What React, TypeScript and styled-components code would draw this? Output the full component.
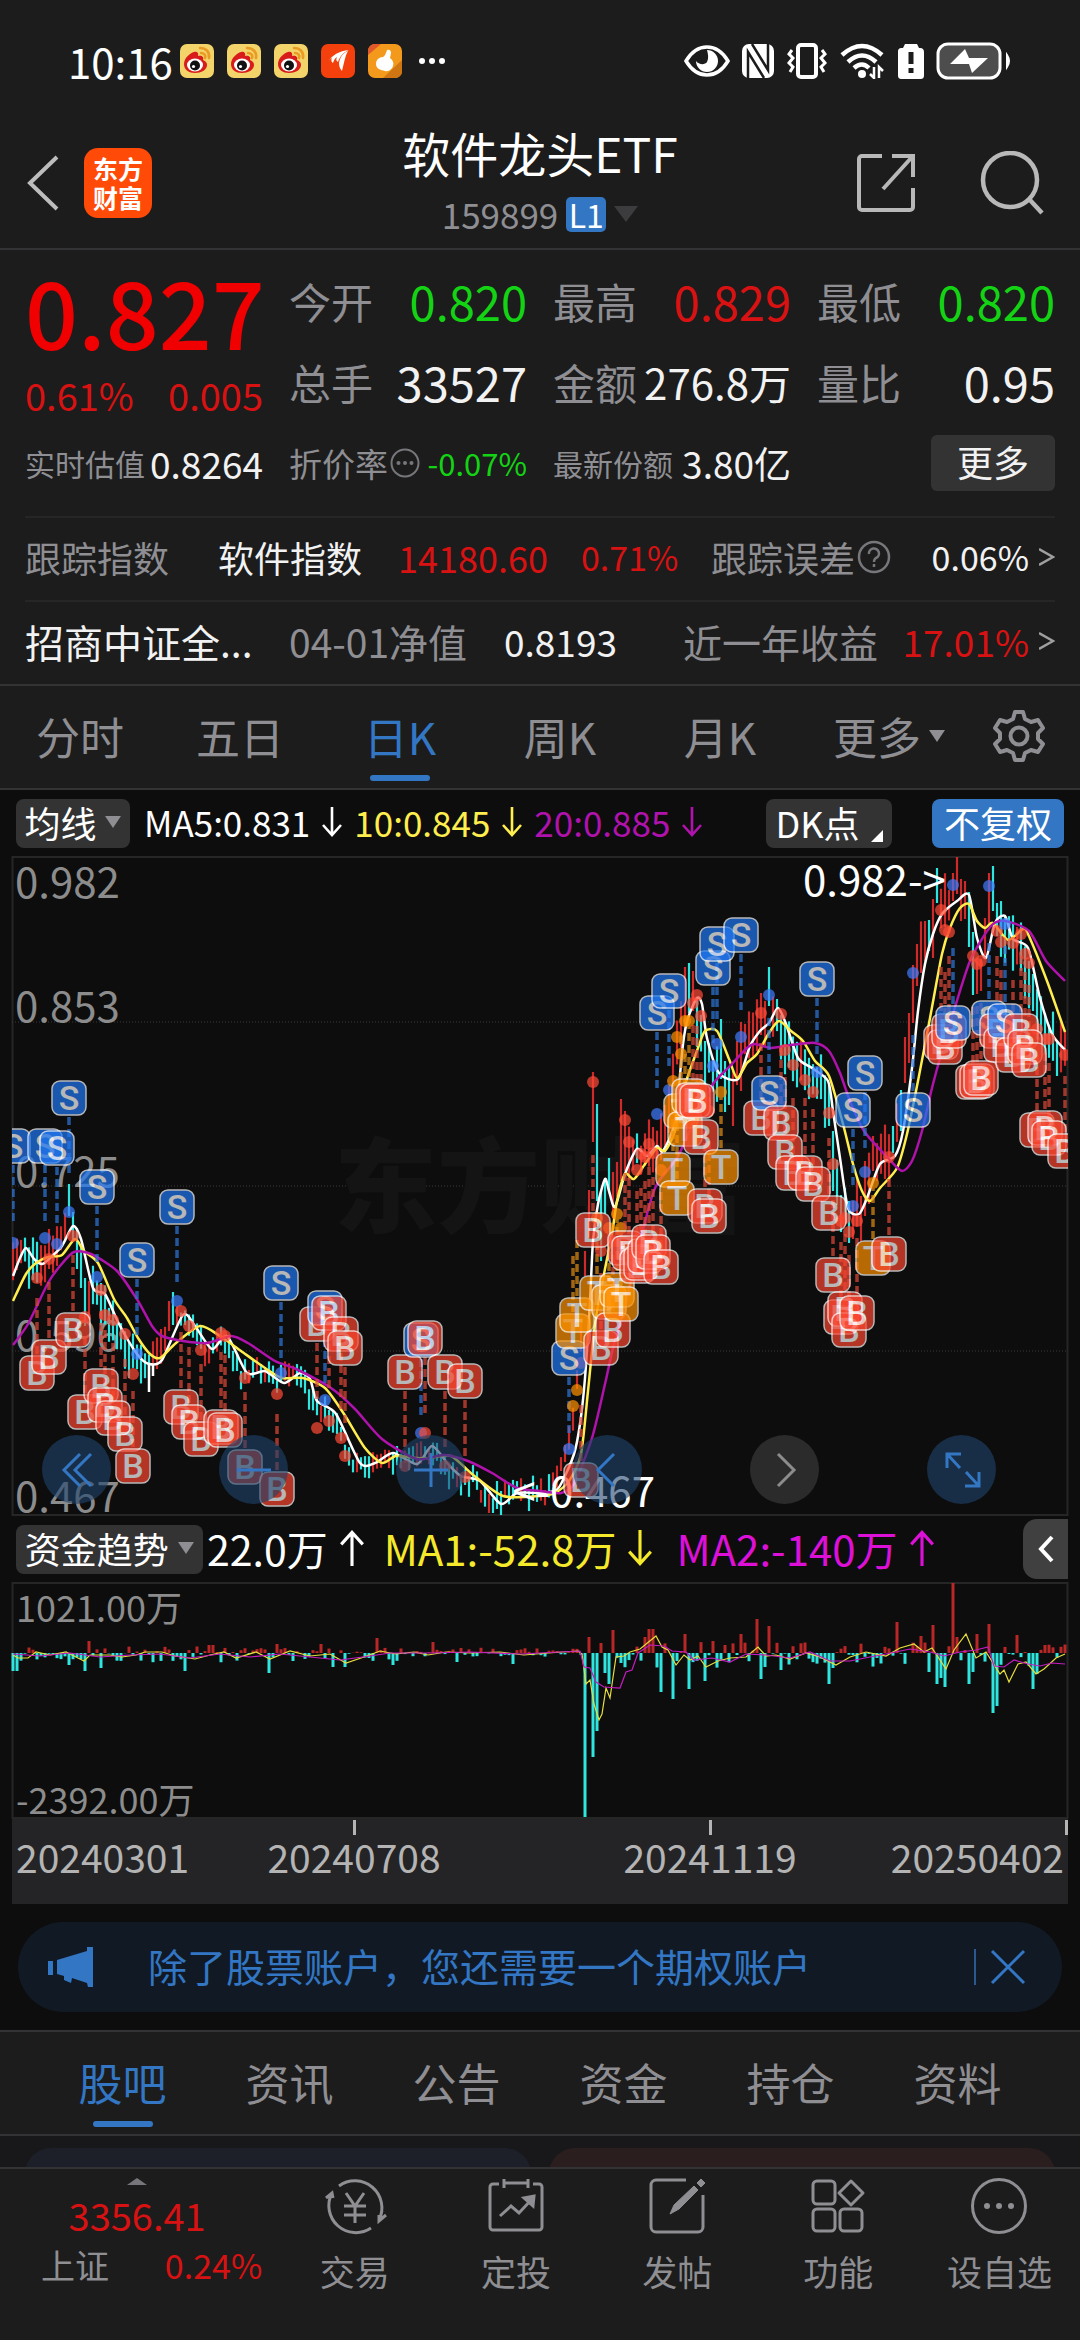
import React from "react";
import styled, { createGlobalStyle } from "styled-components";

const color = {
  page: "#1c1c1c",
  chart: "#0d0d0d",
  line: "#333335",
  soft: "#262626",
  label: "#8e8e93",
  text: "#f2f2f2",
  red: "#d81212",
  green: "#14d214",
  blue: "#3276c4",
  chip: "#333334",
};

const GlobalStyle = createGlobalStyle`
  *, *::before, *::after { box-sizing: border-box; }
  html, body { margin: 0; padding: 0; background: ${color.page}; }
  body { font-family: "Noto Sans CJK SC", "Noto Sans", sans-serif; font-weight: 400; color: ${color.text}; }
  button { font: inherit; color: inherit; background: none; border: 0; padding: 0; margin: 0; }
  svg { display: block; flex: none; }
`;

const Page = styled.div`
  display: flex;
  flex-direction: column;
  min-height: 100vh;
  overflow: hidden;
  white-space: nowrap;
`;

/* ---------- status bar ---------- */

const StatusBar = styled.div`
  display: flex;
  align-items: center;
  justify-content: space-between;
  height: 122px;
  padding: 0 68px;
`;

const StatusGroup = styled.div<{ $gap: number }>`
  display: flex;
  align-items: center;
  gap: ${(p) => p.$gap}px;
`;

const Clock = styled.time`
  font-size: 42px;
  line-height: 48px;
  color: #fff;
  margin-right: -6px;
`;

/* ---------- header ---------- */

const Header = styled.header`
  display: grid;
  grid-template-columns: 1fr auto 1fr;
  align-items: center;
  height: 128px;
  padding: 0 26px 4px;
  border-bottom: 2px solid ${color.line};
`;

const HeaderSide = styled.div<{ $end?: boolean }>`
  display: flex;
  align-items: center;
  justify-content: ${(p) => (p.$end ? "flex-end" : "flex-start")};
  gap: ${(p) => (p.$end ? 64 : 24)}px;
  padding-right: ${(p) => (p.$end ? 10 : 0)}px;
`;

const Logo = styled.div`
  display: grid;
  place-content: center;
  width: 68px;
  height: 70px;
  border-radius: 14px;
  background: #ff4a08;
  color: #fff;
  font-size: 25px;
  line-height: 29px;
  font-weight: 700;
`;

const TitleBlock = styled.div`
  display: flex;
  flex-direction: column;
  align-items: center;
  gap: 7px;
  padding-bottom: 5px;
`;

const Title = styled.h1`
  margin: 0;
  font-size: 48px;
  line-height: 60px;
  font-weight: 400;
  color: #fff;
`;

const Code = styled.div`
  display: flex;
  align-items: center;
  gap: 8px;
  font-size: 35px;
  line-height: 50px;
  color: ${color.label};
`;

const Level = styled.span`
  width: 40px;
  border-radius: 5px;
  background: ${color.blue};
  color: #fff;
  font-size: 32px;
  line-height: 35px;
  text-align: center;
`;

const Triangle = styled.span<{ $size: number; $tone: string; $up?: boolean }>`
  flex: none;
  border: ${(p) => p.$size}px solid transparent;
  border-top-color: ${(p) => (p.$up ? "transparent" : p.$tone)};
  border-top-width: ${(p) => (p.$up ? 0 : p.$size + 4)}px;
  border-bottom-color: ${(p) => (p.$up ? p.$tone : "transparent")};
  border-bottom-width: ${(p) => (p.$up ? p.$size - 3 : 0)}px;
`;

/* ---------- quote ---------- */

const Quote = styled.section`
  padding: 11px 25px 0;
  border-bottom: 2px solid ${color.line};
`;

const QuoteGrid = styled.div`
  display: grid;
  grid-template-columns: repeat(4, minmax(0, 1fr));
  grid-template-rows: 80px 82px 80px;
  column-gap: 26px;
  padding-bottom: 13px;
`;

const PriceCell = styled.div`
  grid-row: span 2;
  display: flex;
  flex-direction: column;
  justify-content: space-between;
  color: ${color.red};
`;

const Price = styled.strong`
  font-size: 93px;
  line-height: 98px;
  font-weight: 500;
  color: #f00000;
`;

const Change = styled.div`
  display: flex;
  justify-content: space-between;
  font-size: 38px;
  line-height: 56px;
`;

const Cell = styled.div`
  display: flex;
  align-items: center;
  justify-content: space-between;
`;

const Text = styled.span<{ $size: number; $tone?: string }>`
  font-size: ${(p) => p.$size}px;
  line-height: 56px;
  color: ${(p) => p.$tone ?? color.text};
`;

const Hint = styled.span`
  display: flex;
  align-items: center;
  gap: 2px;
`;

const MoreButton = styled.button`
  width: 124px;
  height: 56px;
  margin-left: auto;
  padding-bottom: 4px;
  border-radius: 6px;
  background: ${color.chip};
  font-size: 36px;
  line-height: 52px;
`;

const InfoRow = styled.div<{ $cols: string }>`
  display: grid;
  grid-template-columns: ${(p) => p.$cols};
  align-items: center;
  height: 84px;
  padding-bottom: 5px;
  border-top: 2px solid ${color.soft};
`;

const RowEnd = styled.span`
  display: flex;
  align-items: center;
  justify-content: flex-end;
  gap: 10px;
`;

/* ---------- tabs ---------- */

const Tabs = styled.nav<{ $left: number; $right: number }>`
  display: flex;
  height: 104px;
  padding: 0 ${(p) => p.$right}px 0 ${(p) => p.$left}px;
  border-bottom: 2px solid ${color.line};
`;

const Tab = styled.button<{ $active?: boolean; $grow?: number }>`
  display: flex;
  align-items: center;
  justify-content: center;
  gap: 8px;
  flex: ${(p) => p.$grow ?? 160} 1 0;
  padding-bottom: 2px;
  font-size: 44px;
  line-height: 60px;
  color: ${(p) => (p.$active ? color.blue : color.label)};
  position: relative;
  &::after {
    content: "";
    display: ${(p) => (p.$active ? "block" : "none")};
    position: absolute;
    left: calc(50% - 30px);
    bottom: 7px;
    width: 60px;
    height: 6px;
    border-radius: 3px;
    background: ${color.blue};
  }
`;

/* ---------- chart ---------- */

const ChartArea = styled.section`
  background: ${color.chart};
`;

const LegendRow = styled.div`
  display: flex;
  align-items: center;
  height: 66px;
  padding: 0 16px;
`;

const Chip = styled.button<{ $w: number; $tone?: string }>`
  display: flex;
  align-items: center;
  justify-content: space-around;
  position: relative;
  width: ${(p) => p.$w}px;
  height: 49px;
  padding: 0 4px 3px;
  border-radius: 8px;
  background: ${(p) => p.$tone ?? color.chip};
  color: #fff;
  font-size: 36px;
  line-height: 46px;
`;

const Corner = styled.span`
  align-self: flex-end;
  margin-bottom: 3px;
  border-left: 12px solid transparent;
  border-bottom: 12px solid #fff;
`;

const Legend = styled.span<{ $tone: string; $size: number; $gap: number }>`
  display: flex;
  align-items: center;
  gap: 12px;
  margin-left: ${(p) => p.$gap}px;
  padding-bottom: 3px;
  font-size: ${(p) => p.$size}px;
  line-height: 48px;
  color: ${(p) => p.$tone};
`;

const Spacer = styled.span<{ $w?: number }>`
  flex: ${(p) => (p.$w ? `0 0 ${p.$w}px` : "1 1 0")};
`;

const Collapse = styled.button`
  display: grid;
  place-items: center;
  width: 45px;
  height: 60px;
  margin-right: -4px;
  border-radius: 14px 0 0 14px;
  background: #404041;
`;

const ChartBox = styled.div`
  position: relative;
`;

const ChartSvg = styled.svg`
  width: 100%;
  height: auto;
`;

const ChartTools = styled.div`
  position: absolute;
  left: 0;
  right: 0;
  bottom: 12px;
  display: flex;
  justify-content: space-between;
  padding: 0 84px 0 42px;
`;

const Tool = styled.button<{ $muted?: boolean }>`
  display: grid;
  place-items: center;
  width: 69px;
  height: 69px;
  border-radius: 50%;
  color: ${(p) => (p.$muted ? "#8c8c8c" : color.blue)};
  background: ${(p) => (p.$muted ? "rgba(60, 60, 60, 0.65)" : "rgba(31, 66, 108, 0.6)")};
`;

const Dates = styled.div`
  display: grid;
  grid-template-columns: minmax(0, 164fr) minmax(0, 356fr) minmax(0, 356fr) minmax(0, 180fr);
  height: 68px;
  margin: 0 12px;
  background: #242426;
  color: #b4b4b4;
  font-size: 39px;
  line-height: 40px;
`;

const DateLabel = styled.time<{ $align: string }>`
  display: flex;
  justify-content: ${(p) => p.$align};
  padding: 0 4px;
`;

/* ---------- banner ---------- */

const Banner = styled.aside`
  display: flex;
  align-items: center;
  height: 90px;
  margin: 0 18px;
  padding: 0 36px 0 30px;
  border-radius: 45px;
  background: #111a24;
  color: ${color.blue};
  font-size: 39px;
  line-height: 56px;
`;

const BannerWrap = styled.div`
  padding: 18px 0;
`;

const BannerText = styled.span`
  flex: 1;
  padding: 0 0 4px 54px;
`;

const Divider = styled.span`
  width: 2px;
  height: 36px;
  margin-right: 14px;
  background: #29598f;
`;

const TabSection = styled.div`
  border-top: 2px solid ${color.line};
`;

const Cards = styled.div`
  display: grid;
  grid-template-columns: 1fr 1fr;
  gap: 18px;
  height: 31px;
  padding: 12px 25px 0;
  background: #18181a;
  overflow: hidden;
`;

const Card = styled.div<{ $tone: string }>`
  height: 60px;
  border-radius: 26px;
  background: ${(p) => p.$tone};
`;

/* ---------- bottom bar ---------- */

const BottomBar = styled.footer`
  display: flex;
  flex: 1;
  min-height: 176px;
  border-top: 2px solid ${color.line};
`;

const Market = styled.button`
  display: flex;
  flex-direction: column;
  align-items: center;
  flex: 274 1 0;
  padding-top: 9px;
  font-size: 38px;
  line-height: 48px;
  color: ${color.red};
`;

const MarketValue = styled.span`
  margin-top: 6px;
`;

const MarketRow = styled.span`
  display: flex;
  justify-content: space-between;
  align-self: stretch;
  padding: 0 12px 0 41px;
  font-size: 34px;
  line-height: 52px;
`;

const Action = styled.button`
  display: flex;
  flex-direction: column;
  align-items: center;
  flex: 161 1 0;
  padding-top: 9px;
  gap: 11px;
  font-size: 35px;
  line-height: 52px;
  color: ${color.label};
`;

const Muted = styled.span`
  color: ${color.label};
`;

/* ---------- icons ---------- */

const Weibo = () => (
  <svg width="34" height="34" viewBox="0 0 34 34">
    <rect width="34" height="34" rx="7" fill="#f3d46a" />
    <path d="M20 4c6 0 10 4 9 10M21 9c3 0 5 2 4 5" fill="none" stroke="#e99b23" strokeWidth="2.6" strokeLinecap="round" />
    <path d="M14 8c3-1 5 1 4 4 4-1 6 1 5 4 3 1 4 3 4 5 0 5-6 8-12 8S4 26 4 20 10 9 14 8z" fill="#d81b1b" />
    <ellipse cx="15" cy="21" rx="8" ry="6.5" fill="#fff" />
    <circle cx="15" cy="21.500" r="5" fill="#111" />
    <circle cx="13.500" cy="22.500" r="1.600" fill="#fff" />
  </svg>
);

const EastMoney = () => (
  <svg width="34" height="34" viewBox="0 0 34 34">
    <rect width="34" height="34" rx="7" fill="#f4400c" />
    <path d="M7 18C11 11 18 7 28 6c-5 2-9 6-11 12-2-1-2-3-1-5-2 1-3 3-4 6-2-1-2-3-1-5-2 1-3 2-4 4z" fill="#fff" />
    <path d="M18 19c1-6 4-10 9-12-3 5-4 12-6 20-2-2-3-5-3-8z" fill="#fff" />
  </svg>
);

const Thumb = () => (
  <svg width="34" height="34" viewBox="0 0 34 34">
    <rect width="34" height="34" rx="7" fill="#f39a1d" />
    <path d="M34 16v11a7 7 0 0 1-7 7H15z" fill="#cf7612" />
    <path d="M0 11V7a7 7 0 0 1 7-7h6z" fill="#e2582b" />
    <path d="M19 6c2-1 4 0 4 3l-1 5c3 2 4 5 3 8s-4 6-8 5-9-2-9-7c0-4 3-7 7-7 2-1 3-4 4-7z" fill="#fff" />
  </svg>
);

const StatusIcons = () => (
  <StatusGroup $gap={12}>
    <svg width="46" height="32" viewBox="0 0 46 32">
      <path d="M2 16C8 6 15 2 23 2s15 4 21 14c-6 10-13 14-21 14S8 26 2 16z" fill="none" stroke="#fff" strokeWidth="3.500" />
      <path d="M23 5a11 11 0 1 1-11 11c3 4 9 4 11 1 2-4 1-8 0-12z" fill="#fff" />
    </svg>
    <svg width="32" height="34" viewBox="0 0 32 34">
      <rect x="0" y="0" width="32" height="34" rx="7" fill="#fff" />
      <path d="M6 34V8l16 26M10 0l16 26V0" fill="none" stroke="#1c1c1c" strokeWidth="2.500" />
    </svg>
    <svg width="42" height="36" viewBox="0 0 42 36" fill="none" stroke="#fff" strokeWidth="3">
      <rect x="12" y="2" width="18" height="32" rx="3" strokeWidth="4" />
      <path d="M6 7L3 11l4 4-4 5 4 4-3 5M36 7l3 4-4 4 4 5-4 4 3 5" />
    </svg>
    <svg width="46" height="36" viewBox="0 0 46 36" fill="none" stroke="#fff" strokeWidth="4.500">
      <path d="M2 12Q22-6 42 12M8 19Q22 6 36 19M14 25Q22 18 29 25" />
      <circle cx="22" cy="31" r="4" fill="#fff" stroke="none" />
      <path d="M34 24v11l-4-4M39 35V24l4 4" strokeWidth="2.500" />
    </svg>
    <svg width="26" height="35" viewBox="0 0 26 35">
      <path d="M7 0h12l2 4h1c3 0 4 2 4 4v23c0 3-1 4-4 4H4c-3 0-4-1-4-4V8c0-3 1-4 4-4h1z" fill="#fff" />
      <path d="M13 8v12M13 24v5" stroke="#1c1c1c" strokeWidth="5" />
    </svg>
    <svg width="76" height="38" viewBox="0 0 76 38">
      <rect x="2" y="2" width="62" height="34" rx="10" fill="#4d4d4d" stroke="#fff" strokeWidth="3" />
      <path d="M29 7l4 9h19L36 31l-3-9H14z" fill="#fff" />
      <path d="M71 13q4 6 0 12z" fill="#fff" stroke="#fff" strokeWidth="2" />
    </svg>
  </StatusGroup>
);

const Arrow = ({ up, size = 30 }: { up?: boolean; size?: number }) => (
  <svg width={(size * 2) / 3} height={size} viewBox="0 0 20 30" fill="none" stroke="currentColor" strokeWidth="2.600">
    <path d={up ? "M10 30V2M1 12l9-10 9 10" : "M10 0v28M1 18l9 10 9-10"} />
  </svg>
);

const Gear = () => (
  <svg width="54" height="54" viewBox="0 0 54 54" fill="none" stroke={color.label} strokeWidth="4" strokeLinejoin="round">
    <path d="M23 3h8l2 7 6 3 7-2 5 8-5 5v6l5 5-5 8-7-2-6 3-2 7h-8l-2-7-6-3-7 2-5-8 5-5v-6l-5-5 5-8 7 2 6-3z" />
    <circle cx="27" cy="27" r="8.500" />
  </svg>
);

/* ---------- chart data ---------- */

type Pt = [number, number];

const parse = (s: string): Pt[] => s.split(" ").map((p) => p.split(",").map(Number) as Pt);

const ma5 = parse(
  "13,1275 20,1257 26,1247 34,1258 42,1263 49,1258 62,1245 73,1225 81,1238 93,1287 105,1293 119,1323 137,1353 149,1363 162,1359 183,1314 195,1325 212,1348 227,1335 247,1372 265,1370 284,1382 300,1372 310,1378 317,1400 336,1413 360,1462 375,1462 393,1452 417,1463 432,1445 448,1463 461,1475 480,1480 501,1503 517,1492 540,1492 555,1490 561,1483 574,1453 580,1423 585,1377 590,1300 593,1240 598,1203 605,1178 609,1190 615,1206 625,1173 637,1148 647,1155 657,1145 663,1150 675,1120 683,1043 688,1017 697,997 702,1003 707,1037 719,1072 738,1078 750,1045 760,1030 769,1022 778,1007 786,1023 798,1057 812,1067 828,1080 833,1110 840,1157 848,1207 859,1213 867,1197 880,1163 895,1155 903,1130 912,1067 918,1010 925,963 933,933 942,913 957,900 969,894 977,937 986,957 995,922 1005,915 1013,938 1028,947 1040,997 1052,1033 1065,1049"
);
const ma10 = parse(
  "13,1300 26,1273 36,1262 48,1256 62,1254 75,1238 84,1250 98,1262 114,1298 127,1317 138,1337 150,1353 160,1357 176,1342 200,1325 220,1335 241,1350 265,1367 282,1377 303,1377 325,1387 344,1413 365,1447 382,1462 396,1455 417,1457 430,1457 451,1455 472,1473 503,1495 540,1495 555,1492 569,1480 581,1453 588,1390 595,1323 604,1273 612,1233 617,1200 625,1173 634,1178 645,1163 657,1147 665,1150 675,1130 683,1090 698,1047 705,1030 717,1030 729,1058 737,1077 747,1062 757,1053 769,1032 779,1020 791,1030 803,1040 815,1060 829,1075 843,1123 853,1163 862,1190 870,1200 880,1187 897,1167 907,1133 918,1080 930,1017 942,953 950,927 960,907 969,903 977,920 985,927 993,922 1008,939 1023,928 1028,933 1047,980 1065,1031"
);
const ma20 = parse(
  "13,1344 28,1323 48,1282 60,1265 74,1251 91,1253 117,1270 138,1300 152,1325 162,1335 183,1340 207,1342 231,1335 248,1342 275,1360 296,1368 331,1387 355,1408 382,1438 417,1458 444,1454 468,1460 492,1472 517,1487 540,1490 561,1492 574,1483 592,1437 605,1383 613,1347 623,1313 647,1213 657,1183 677,1157 693,1123 713,1083 730,1065 747,1047 755,1043 771,1047 791,1044 815,1042 829,1050 840,1072 850,1100 864,1130 888,1157 902,1170 912,1160 922,1130 933,1083 950,1023 970,960 991,925 1005,920 1029,930 1046,960 1065,980"
);

/* Passes a smooth curve through every point, with gentle tangents. */
const curve = (pts: Pt[]) => {
  const at = (i: number) => pts[Math.min(Math.max(i, 0), pts.length - 1)];
  let d = `M${pts[0].join()}`;
  for (let i = 0; i < pts.length - 1; i++) {
    const [p, a, b, n] = [at(i - 1), at(i), at(i + 1), at(i + 2)];
    const c1 = [a[0] + (b[0] - p[0]) / 8, a[1] + (b[1] - p[1]) / 8];
    const c2 = [b[0] - (n[0] - a[0]) / 8, b[1] - (n[1] - a[1]) / 8];
    d += `C${c1.join()} ${c2.join()} ${b.join()}`;
  }
  return d;
};

const valueAt = (pts: Pt[], x: number) => {
  for (let i = 1; i < pts.length; i++) {
    if (x <= pts[i][0]) {
      const [ax, ay] = pts[i - 1];
      const [bx, by] = pts[i];
      return ay + ((by - ay) * (x - ax)) / (bx - ax);
    }
  }
  return pts[pts.length - 1][1];
};

const noise = (i: number) => {
  const v = Math.sin(i * 127.1 + 11.7) * 43758.5453;
  return v - Math.floor(v);
};

const UP = "#cf2a2a";
const DOWN = "#2fe5e0";

type Bar = { x: number; top: number; bottom: number; tone: string };

const fixedBars: Record<number, [number, number, string]> = {
  65: [1212, 1240, UP], 69: [1183, 1215, DOWN], 73: [1211, 1240, DOWN], 81: [1245, 1287, DOWN], 85: [1277, 1325, DOWN], 89: [1280, 1318, UP],
  169: [1300, 1330, UP], 173: [1291, 1324, DOWN], 593: [1071, 1141, UP], 597: [1103, 1200, DOWN], 601: [1190, 1260, DOWN], 585: [1250, 1275, UP], 609: [1157, 1190, DOWN],
  621: [1098, 1180, UP], 625: [1110, 1170, UP], 689: [962, 1012, DOWN], 685: [966, 1030, UP], 693: [970, 1010, UP], 769: [966, 1005, DOWN], 761: [992, 1034, UP],
  705: [1040, 1085, DOWN], 721: [1018, 1078, DOWN], 725: [1060, 1111, DOWN], 729: [1066, 1104, DOWN], 733: [1070, 1125, UP], 741: [1021, 1090, UP], 849: [1200, 1242, DOWN], 861: [1195, 1240, UP],
  833: [1130, 1190, DOWN], 829: [1083, 1125, DOWN], 865: [1160, 1215, UP], 873: [1135, 1170, UP], 893: [1125, 1152, DOWN], 937: [867, 902, DOWN], 933: [898, 957, UP], 929: [919, 950, DOWN], 925: [920, 960, UP],
  957: [856, 893, UP], 953: [872, 900, UP], 961: [878, 920, UP], 965: [880, 918, UP], 989: [872, 923, UP], 993: [865, 910, DOWN], 997: [902, 935, DOWN],
  917: [943, 985, UP], 913: [964, 1022, UP], 909: [1012, 1062, UP], 905: [1036, 1082, UP], 901: [1089, 1130, DOWN], 969: [891, 946, DOWN], 973: [931, 994, DOWN], 977: [960, 993, UP], 981: [958, 990, UP],
  1033: [973, 1010, DOWN], 1057: [1040, 1075, DOWN], 497: [1480, 1508, DOWN], 501: [1490, 1514, DOWN],
};

const candles: Bar[] = Array.from({ length: 264 }, (_, i) => {
  const x = 13 + i * 4;
  const fixed = fixedBars[x];
  if (fixed) return { x, top: fixed[0], bottom: fixed[1], tone: fixed[2] };
  const mid = valueAt(ma5, x + 7) + (noise(i) - 0.5) * 16;
  const slope = valueAt(ma5, x + 9) - valueAt(ma5, x + 1);
  const base = x < 170 ? 11 : x < 580 ? 6 : 14;
  const half = base + noise(i + 500) * base;
  const up = slope + (noise(i + 900) - 0.5) * 24 < 0;
  return { x, top: Math.max(857, mid - half), bottom: Math.min(1512, mid + half), tone: up ? UP : DOWN };
});

type Mark = { k: "S" | "B" | "T"; x: number; y: number; dir: number; dot: number };

/* kind, x, y, dot level, and "r" where the stem points the other way */
const marks: Mark[] = (
  "S,13,1145,1242 B,37,1372,1277 S,45,1145,1237 B,49,1356,1258 S,57,1147,1243 S,69,1097,1211 B,73,1329,1235 B,85,1411,1316 S,97,1186,1276 B,101,1385,1289 B,105,1404,1314 B,113,1417,1319 B,125,1433,1333 B,133,1465,1373 S,137,1259,1353 " +
  "S,177,1206,1300 B,181,1406,1310 B,189,1421,1325 B,201,1438,1349 B,221,1426,1332 B,225,1429,1335 B,245,1466,1377 B,277,1488,1393 S,281,1282,1372 B,317,1323,1427,r S,325,1307,1399 B,329,1312,1420,r B,341,1333,1437,r B,345,1347,1455,r " +
  "B,405,1371,1465,r S,421,1339,1432 B,425,1337,1432,r B,445,1371,1465,r B,465,1380,1476,r S,569,1357,1448 T,573,1330,1405 T,577,1314,1389 B,581,1479,1362 B,593,1229,1081 T,597,1292,1217 B,601,1347,1250 T,609,1301,1227 B,613,1329,1240 T,617,1289,1213 T,621,1303,1227 " +
  "B,625,1247,1119 B,629,1252,1141 B,637,1265,1169 B,641,1262,1153 B,645,1255,1156 B,649,1241,1143 B,653,1251,1152 S,657,1012,1113 B,661,1266,1169 S,669,990,1089 T,673,1169,1080 T,677,1197,1036 T,681,1110,1053 T,685,1128,1020 T,689,1095,1020 B,693,1099,1002 B,697,1100,994 B,701,1136,1015 B,705,1205,1100 B,709,1215,1110 " +
  "S,713,967,1065 S,717,943,1043 T,721,1166,1091 S,741,934,1036 B,761,1117,1012 S,769,1092,994,r B,781,1122,1013 B,785,1151,1049 B,793,1172,1064 B,805,1172,1079 B,813,1183,1091 S,817,978,1071 B,829,1212,1112 B,833,1274,1163 B,841,1316,1220 B,845,1308,1217 B,849,1329,1231 S,853,1109,1205 B,857,1312,1220 S,865,1072,1171 T,873,1257,1182 B,889,1253,1156 S,913,1109,972,r " +
  "B,941,1041,909 B,945,1046,929 B,949,1030,931 S,953,1022,884,r B,973,1081,955 B,977,1080,963 B,981,1077,960 S,989,1017,885,r B,997,1030,930 B,1001,1044,941 S,1005,1020,923,r B,1013,1054,942 B,1021,1030,933 B,1025,1046,953 B,1029,1059,962 B,1037,1129,1028 B,1045,1127,1038 B,1049,1137,1038 B,1065,1150,1054"
)
  .split(" ")
  .map((s) => {
    const [k, x, y, dot, r] = s.split(",");
    const dir = (k === "S" ? 1 : -1) * (r ? -1 : 1);
    return { k: k as Mark["k"], x: +x, y: +y, dot: +dot, dir };
  });

const markTone = { S: "#2078f4", B: "#fb4630", T: "#ff9200" };
const dotTone = { S: "#3e7cff", B: "#ff4a36", T: "#ff9200" };

const flowBars: Record<number, number> = {
  13: 1669, 17: 1669, 69: 1663, 85: 1669, 89: 1639, 101: 1666, 185: 1669, 209: 1643, 213: 1643, 269: 1671, 277: 1642, 321: 1642, 333: 1665, 345: 1665, 377: 1636,
  393: 1663, 433: 1640, 457: 1660, 513: 1662, 585: 1815, 589: 1635, 593: 1755, 597: 1729, 601: 1641, 605: 1671, 609: 1682, 613: 1628, 645: 1635, 649: 1627, 653: 1627,
  661: 1690, 673: 1697, 685: 1632, 689: 1687, 705: 1679, 713: 1639, 741: 1632, 757: 1617, 761: 1677, 765: 1665, 769: 1624, 781: 1668, 829: 1682, 833: 1666, 897: 1620,
  921: 1634, 929: 1670, 933: 1623, 937: 1682, 941: 1676, 945: 1685, 953: 1581, 957: 1635, 969: 1682, 973: 1670, 977: 1632, 989: 1622, 993: 1711, 997: 1704, 1017: 1633,
  1033: 1687, 1037: 1672, 1045: 1643,
};

const flow: Pt[] = Array.from({ length: 264 }, (_, i) => {
  const x = 13 + i * 4;
  if (flowBars[x]) return [x, flowBars[x]];
  const calm = x > 400 && x < 582;
  const n = noise(i + 77) - (calm ? 0.6 : 0.42);
  const reach = x > 600 ? 26 : calm ? 9 : 16;
  return [x, 1651 + n * reach];
});

const flowFast = parse(
  "13,1653 18,1656 28,1656 36,1650 50,1653 66,1650 74,1654 84,1659 90,1653 110,1653 122,1655 136,1653 145,1650 162,1650 175,1654 195,1657 210,1653 224,1650 236,1656 256,1650 270,1657 290,1649 310,1654 330,1652 346,1661 364,1655 380,1649 396,1652 414,1650 428,1653 446,1650 470,1651 500,1650 524,1653 548,1651 578,1649 582,1652 586,1682 590,1678 594,1702 599,1718 602,1712 606,1686 610,1696 616,1655 624,1654 630,1650 640,1647 656,1634 662,1645 668,1648 676,1663 684,1653 690,1658 698,1654 706,1665 718,1659 730,1656 746,1655 758,1645 766,1654 776,1653 790,1657 806,1651 820,1655 836,1663 850,1655 866,1650 886,1654 900,1646 914,1642 924,1650 932,1646 946,1667 954,1648 966,1632 976,1656 986,1650 1000,1672 1004,1668 1009,1680 1018,1662 1026,1660 1036,1672 1044,1667 1056,1656 1065,1652"
);
const flowSlow = parse(
  "13,1652 40,1654 70,1651 100,1655 130,1653 160,1652 190,1656 220,1652 250,1655 280,1652 310,1655 340,1658 370,1654 390,1651 430,1651 470,1650 520,1652 580,1649 584,1665 590,1666 596,1680 604,1685 620,1686 626,1670 632,1668 638,1651 650,1643 664,1644 672,1649 686,1650 694,1658 712,1656 730,1660 746,1652 766,1653 790,1656 810,1650 830,1659 850,1659 870,1655 886,1652 910,1647 930,1650 944,1654 960,1650 976,1648 988,1645 994,1664 1004,1665 1014,1658 1028,1662 1040,1664 1052,1661 1065,1662"
);

const priceLabels: [string, number][] = [
  ["0.982", 897],
  ["0.853", 1021],
  ["0.725", 1186],
  ["0.596", 1350],
  ["0.467", 1511],
];

const PriceChart = () => (
  <ChartSvg viewBox="0 855 1080 660" role="img" aria-label="日K">
    <defs>
      <clipPath id="plot">
        <rect x="12" y="856" width="1056" height="658" />
      </clipPath>
    </defs>
    <rect x="12.500" y="856" width="1055" height="658" fill="none" stroke="#262627" strokeWidth="2" />
    {[1021, 1185, 1350].map((y) => (
      <line key={y} x1="12" x2="1068" y1={y} y2={y} stroke="#3a3a3a" strokeDasharray="1 2" />
    ))}
    <text x="540" y="1224" fontSize="103" fontWeight="900" fill="#141414" textAnchor="middle">东方财富</text>
    {priceLabels.map(([label, y]) => (
      <text key={label} x="15" y={y} fontSize="42" fill="#8c8c8c">{label}</text>
    ))}
    <g clipPath="url(#plot)">
      {candles.map((c) => (
        <line key={c.x} x1={c.x} x2={c.x} y1={c.top} y2={c.bottom} stroke={c.tone} strokeWidth="2.200" />
      ))}
      <g fill="none" strokeWidth="2.500" strokeLinejoin="round">
        <path d={curve(ma5)} stroke="#fff" />
        <path d="M149,1363V1391M153,1363V1375" stroke="#fff" />
        <path d={curve(ma10)} stroke="#ffee4d" />
        <path d={curve(ma20)} stroke="#b012ac" />
      </g>
      {marks.map((m, i) => (
        <g key={i} opacity="0.7">
          <line x1={m.x} x2={m.x} y1={m.y + m.dir * 19} y2={m.y + m.dir * 76} stroke={m.k === "S" ? "#2f78dc" : m.k === "T" ? "#e08c12" : "#e04a38"} strokeWidth="3.500" strokeDasharray="8 4" />
          <circle cx={m.x} cy={m.dot} r="6" fill={dotTone[m.k]} />
        </g>
      ))}
      <text x="803" y="895" fontSize="42" fill="#fff">0.982-&gt;</text>
      <text x="655" y="1506" fontSize="42" fill="#fff" textAnchor="end">&lt;-0.467</text>
      {marks.map((m, i) => (
        <g key={i} opacity="0.7">
          <rect x={m.x - 17} y={m.y - 17} width="34" height="34" rx="8" fill={markTone[m.k]} stroke="#fff" strokeWidth="1.500" />
          <text x={m.x} y={m.y + 12} fontSize="34" fontFamily="Roboto, sans-serif" fontWeight="500" fill="#fff" textAnchor="middle">{m.k}</text>
        </g>
      ))}
    </g>
  </ChartSvg>
);

const FlowChart = () => (
  <ChartSvg viewBox="0 1580 1080 254" role="img" aria-label="资金趋势">
    <rect x="12" y="1817" width="1056" height="17" fill="#242426" />
    <rect x="12.500" y="1581" width="1055" height="235" fill="none" stroke="#262627" strokeWidth="2" />
    {flow.map(([x, y]) => (
      <line key={x} x1={x} x2={x} y1="1651" y2={y} stroke={y < 1651 ? "#b92626" : DOWN} strokeWidth="3" />
    ))}
    <polyline points={flowFast.join(" ")} fill="none" stroke="#e6de3c" strokeWidth="1.200" />
    <polyline points={flowSlow.join(" ")} fill="none" stroke="#c31cc0" strokeWidth="1.200" />
    <text x="16" y="1620" fontSize="36" fill="#8c8c8c">1021.00万</text>
    <text x="16" y="1812" fontSize="36" fill="#8c8c8c">-2392.00万</text>
    {[354, 710, 1066].map((x) => (
      <rect key={x} x={x - 1} y="1818" width="3" height="15" fill="#b4b4b4" />
    ))}
  </ChartSvg>
);

const toolIcons: [string, string][] = [
  ["最早", "M22 2L6 18l16 16M33 2L17 18l16 16"],
  ["缩小", "M2 18h34"],
  ["放大", "M2 18h34M19 1v34"],
  ["向左", "M25 2L9 18l16 16"],
  ["向右", "M12 2l16 16-16 16"],
  ["全屏", "M4 16V2h14M5 3l12 13M36 20v14H22M35 33L23 20"],
];

const actions: [string, React.ReactNode][] = [
  [
    "交易",
    <>
      <path d="M13 8A27 27 0 0 1 53 42M45 50A27 27 0 0 1 6 15M0 20l6-5 1 5M60 37l-7 6v-6" />
      <path d="M20 15l9 13 9-13M18 28h22M18 37h22M29 28v17" />
    </>,
  ],
  [
    "定投",
    <>
      <path d="M12 6H6a3 3 0 0 0-3 3v40a3 3 0 0 0 3 3h46a3 3 0 0 0 3-3V9a3 3 0 0 0-3-3h-6M17 1v9M41 1v9M17 5h24" />
      <path d="M13 38l11-10 8 7 13-14" />
      <path d="M37 20l10-2-1 10z" fill="currentColor" />
    </>,
  ],
  [
    "发帖",
    <>
      <path d="M38 2H8a5 5 0 0 0-5 5v42a5 5 0 0 0 5 5h42a5 5 0 0 0 5-5V17" />
      <path d="M22 36l4-9L46 8l4 4-19 19zM49 5l4-4 4 4-4 4z" fill="currentColor" strokeWidth="1" />
    </>,
  ],
  [
    "功能",
    <>
      <rect x="4" y="3" width="22" height="23" rx="4" />
      <rect x="4" y="31" width="22" height="22" rx="4" />
      <rect x="31" y="31" width="22" height="22" rx="4" />
      <path d="M42 3l12 12-12 12-12-12z" strokeLinejoin="round" />
    </>,
  ],
  [
    "设自选",
    <>
      <circle cx="29" cy="28" r="26.500" />
      <g fill="currentColor" stroke="none">
        <circle cx="17" cy="28" r="3" />
        <circle cx="29" cy="28" r="3" />
        <circle cx="41" cy="28" r="3" />
      </g>
    </>,
  ],
];

const Chevron = () => (
  <svg width="16" height="20" viewBox="0 0 16 20" fill="none" stroke="#a0a0a0" strokeWidth="2.500">
    <path d="M0 2l14 8-14 8" />
  </svg>
);

export default function App() {
  return (
    <Page>
      <GlobalStyle />
      <StatusBar>
        <StatusGroup $gap={13}>
          <Clock>10:16</Clock>
          <Weibo />
          <Weibo />
          <Weibo />
          <EastMoney />
          <Thumb />
          <svg width="34" height="8" viewBox="0 0 34 8" fill="#fff">
            <circle cx="7" cy="4" r="3" />
            <circle cx="17" cy="4" r="3" />
            <circle cx="27" cy="4" r="3" />
          </svg>
        </StatusGroup>
        <StatusIcons />
      </StatusBar>

      <Header>
        <HeaderSide>
          <button aria-label="返回">
            <svg width="34" height="56" viewBox="0 0 34 56" fill="none" stroke="#bdbdbd" strokeWidth="4">
              <path d="M31 2L4 28l27 26" />
            </svg>
          </button>
          <Logo>
            <span>东方</span>
            <span>财富</span>
          </Logo>
        </HeaderSide>
        <TitleBlock>
          <Title>软件龙头ETF</Title>
          <Code>
            159899<Level>L1</Level>
            <Triangle $size={12} $tone="#3c3c3e" />
          </Code>
        </TitleBlock>
        <HeaderSide $end>
          <button aria-label="分享">
            <svg width="60" height="60" viewBox="0 0 60 60" fill="none" stroke="#b8b8b8" strokeWidth="4">
              <path d="M26 3H6a3 3 0 0 0-3 3v48a3 3 0 0 0 3 3h48a3 3 0 0 0 3-3V35M36 3h21v21M56 4L27 36" />
            </svg>
          </button>
          <button aria-label="搜索">
            <svg width="64" height="64" viewBox="0 0 64 64" fill="none" stroke="#b8b8b8" strokeWidth="4.500">
              <circle cx="30" cy="29" r="27" />
              <path d="M49 48l13 14" />
            </svg>
          </button>
        </HeaderSide>
      </Header>

      <Quote>
        <QuoteGrid>
          <PriceCell>
            <Price>0.827</Price>
            <Change>
              <span>0.61%</span>
              <span>0.005</span>
            </Change>
          </PriceCell>
          <Cell><Text $size={42} $tone={color.label}>今开</Text><Text $size={47} $tone={color.green}>0.820</Text></Cell>
          <Cell><Text $size={42} $tone={color.label}>最高</Text><Text $size={47} $tone={color.red}>0.829</Text></Cell>
          <Cell><Text $size={42} $tone={color.label}>最低</Text><Text $size={47} $tone={color.green}>0.820</Text></Cell>
          <Cell><Text $size={42} $tone={color.label}>总手</Text><Text $size={47}>33527</Text></Cell>
          <Cell><Text $size={42} $tone={color.label}>金额</Text><Text $size={42}>276.8万</Text></Cell>
          <Cell><Text $size={42} $tone={color.label}>量比</Text><Text $size={47}>0.95</Text></Cell>
          <Cell><Text $size={30} $tone={color.label}>实时估值</Text><Text $size={37}>0.8264</Text></Cell>
          <Cell>
            <Hint>
              <Text $size={33} $tone={color.label}>折价率</Text>
              <svg width="30" height="30" viewBox="0 0 30 30" fill="#77777b">
                <circle cx="15" cy="15" r="13.500" fill="none" stroke="#77777b" strokeWidth="2" />
                <circle cx="8.500" cy="15" r="2" />
                <circle cx="15" cy="15" r="2" />
                <circle cx="21.500" cy="15" r="2" />
              </svg>
            </Hint>
            <Text $size={31} $tone={color.green}>-0.07%</Text>
          </Cell>
          <Cell><Text $size={30} $tone={color.label}>最新份额</Text><Text $size={37}>3.80亿</Text></Cell>
          <Cell><MoreButton>更多</MoreButton></Cell>
        </QuoteGrid>
        <InfoRow $cols="193fr 180fr 183fr 130fr 344fr">
          <Text $size={36} $tone={color.label}>跟踪指数</Text>
          <Text $size={36}>软件指数</Text>
          <Text $size={36} $tone={color.red}>14180.60</Text>
          <Text $size={34} $tone={color.red}>0.71%</Text>
          <Cell>
            <Hint>
              <Text $size={36} $tone={color.label}>跟踪误差</Text>
              <svg width="34" height="34" viewBox="0 0 34 34" fill="none" stroke="#77777b" strokeWidth="2.500">
                <circle cx="17" cy="17" r="15" />
                <path d="M12 14a5 5 0 1 1 7 4q-2 1-2 4M17 24v3" />
              </svg>
            </Hint>
            <RowEnd><Text $size={34}>0.06%</Text><Chevron /></RowEnd>
          </Cell>
        </InfoRow>
        <InfoRow $cols="264fr 215fr 179fr 372fr">
          <Text $size={39}>招商中证全...</Text>
          <Text $size={39} $tone={color.label}>04-01净值</Text>
          <Text $size={37}>0.8193</Text>
          <Cell>
            <Text $size={39} $tone={color.label}>近一年收益</Text>
            <RowEnd><Text $size={37} $tone={color.red}>17.01%</Text><Chevron /></RowEnd>
          </Cell>
        </InfoRow>
      </Quote>

      <Tabs $left={0} $right={20}>
        <Tab>分时</Tab>
        <Tab>五日</Tab>
        <Tab $active>日K</Tab>
        <Tab>周K</Tab>
        <Tab>月K</Tab>
        <Tab $grow={178}>更多<Triangle $size={8} $tone={color.label} /></Tab>
        <Tab $grow={82} aria-label="设置"><Gear /></Tab>
      </Tabs>

      <ChartArea>
        <LegendRow>
          <Chip $w={114}>均线<Triangle $size={8} $tone={color.label} /></Chip>
          <Legend $tone="#fff" $size={35} $gap={14}>MA5:0.831<Arrow /></Legend>
          <Legend $tone="#ffee4d" $size={35} $gap={12}>10:0.845<Arrow /></Legend>
          <Legend $tone="#b012ac" $size={35} $gap={12}>20:0.885<Arrow /></Legend>
          <Spacer />
          <Chip $w={126}>DK点<Corner /></Chip>
          <Spacer $w={40} />
          <Chip $w={132} $tone={color.blue}>不复权</Chip>
        </LegendRow>
        <ChartBox>
          <PriceChart />
          <ChartTools>
            {toolIcons.map(([label, d]) => (
              <Tool key={label} aria-label={label} $muted={label === "向右"}>
                <svg width="38" height="36" viewBox="0 0 38 36" fill="none" stroke="currentColor" strokeWidth="3">
                  <path d={d} />
                </svg>
              </Tool>
            ))}
          </ChartTools>
        </ChartBox>
        <LegendRow>
          <Chip $w={187}>资金趋势<Triangle $size={8} $tone={color.label} /></Chip>
          <Legend $tone="#fff" $size={41} $gap={4}>22.0万<Arrow up size={36} /></Legend>
          <Legend $tone="#f5e92c" $size={42} $gap={20}>MA1:-52.8万<Arrow size={36} /></Legend>
          <Legend $tone="#dd10d8" $size={42} $gap={24}>MA2:-140万<Arrow up size={36} /></Legend>
          <Spacer />
          <Collapse aria-label="展开">
            <svg width="18" height="28" viewBox="0 0 18 28" fill="none" stroke="#fff" strokeWidth="4">
              <path d="M15 2L4 14l11 12" />
            </svg>
          </Collapse>
        </LegendRow>
        <FlowChart />
        <Dates>
          <DateLabel $align="flex-start">20240301</DateLabel>
          <DateLabel $align="center">20240708</DateLabel>
          <DateLabel $align="center">20241119</DateLabel>
          <DateLabel $align="flex-end">20250402</DateLabel>
        </Dates>
        <BannerWrap>
          <Banner>
            <svg width="46" height="40" viewBox="0 0 46 40" fill={color.blue}>
              <path d="M0 14h5v14H0zM9 13L39 4V0h6v40h-5l-1-4-15-5-1 5-7-3v-4l-7-2z" />
            </svg>
            <BannerText>除了股票账户，您还需要一个期权账户</BannerText>
            <Divider />
            <button aria-label="关闭">
              <svg width="36" height="36" viewBox="0 0 36 36" stroke={color.blue} strokeWidth="3">
                <path d="M2 2l32 32M34 2L2 34" />
              </svg>
            </button>
          </Banner>
        </BannerWrap>
      </ChartArea>

      <TabSection>
        <Tabs $left={39} $right={39}>
          <Tab $active>股吧</Tab>
          <Tab>资讯</Tab>
          <Tab>公告</Tab>
          <Tab>资金</Tab>
          <Tab>持仓</Tab>
          <Tab>资料</Tab>
        </Tabs>
      </TabSection>
      <Cards>
        <Card $tone="#1d2029" />
        <Card $tone="#2a1f1e" />
      </Cards>

      <BottomBar>
        <Market>
          <Triangle $size={10} $tone="#77777b" $up />
          <MarketValue>3356.41</MarketValue>
          <MarketRow>
            <Muted>上证</Muted>
            <span>0.24%</span>
          </MarketRow>
        </Market>
        {actions.map(([label, icon]) => (
          <Action key={label}>
            <svg width="58" height="56" viewBox="0 0 58 56" fill="none" stroke="currentColor" strokeWidth="3" overflow="visible">
              {icon}
            </svg>
            {label}
          </Action>
        ))}
      </BottomBar>
    </Page>
  );
}
